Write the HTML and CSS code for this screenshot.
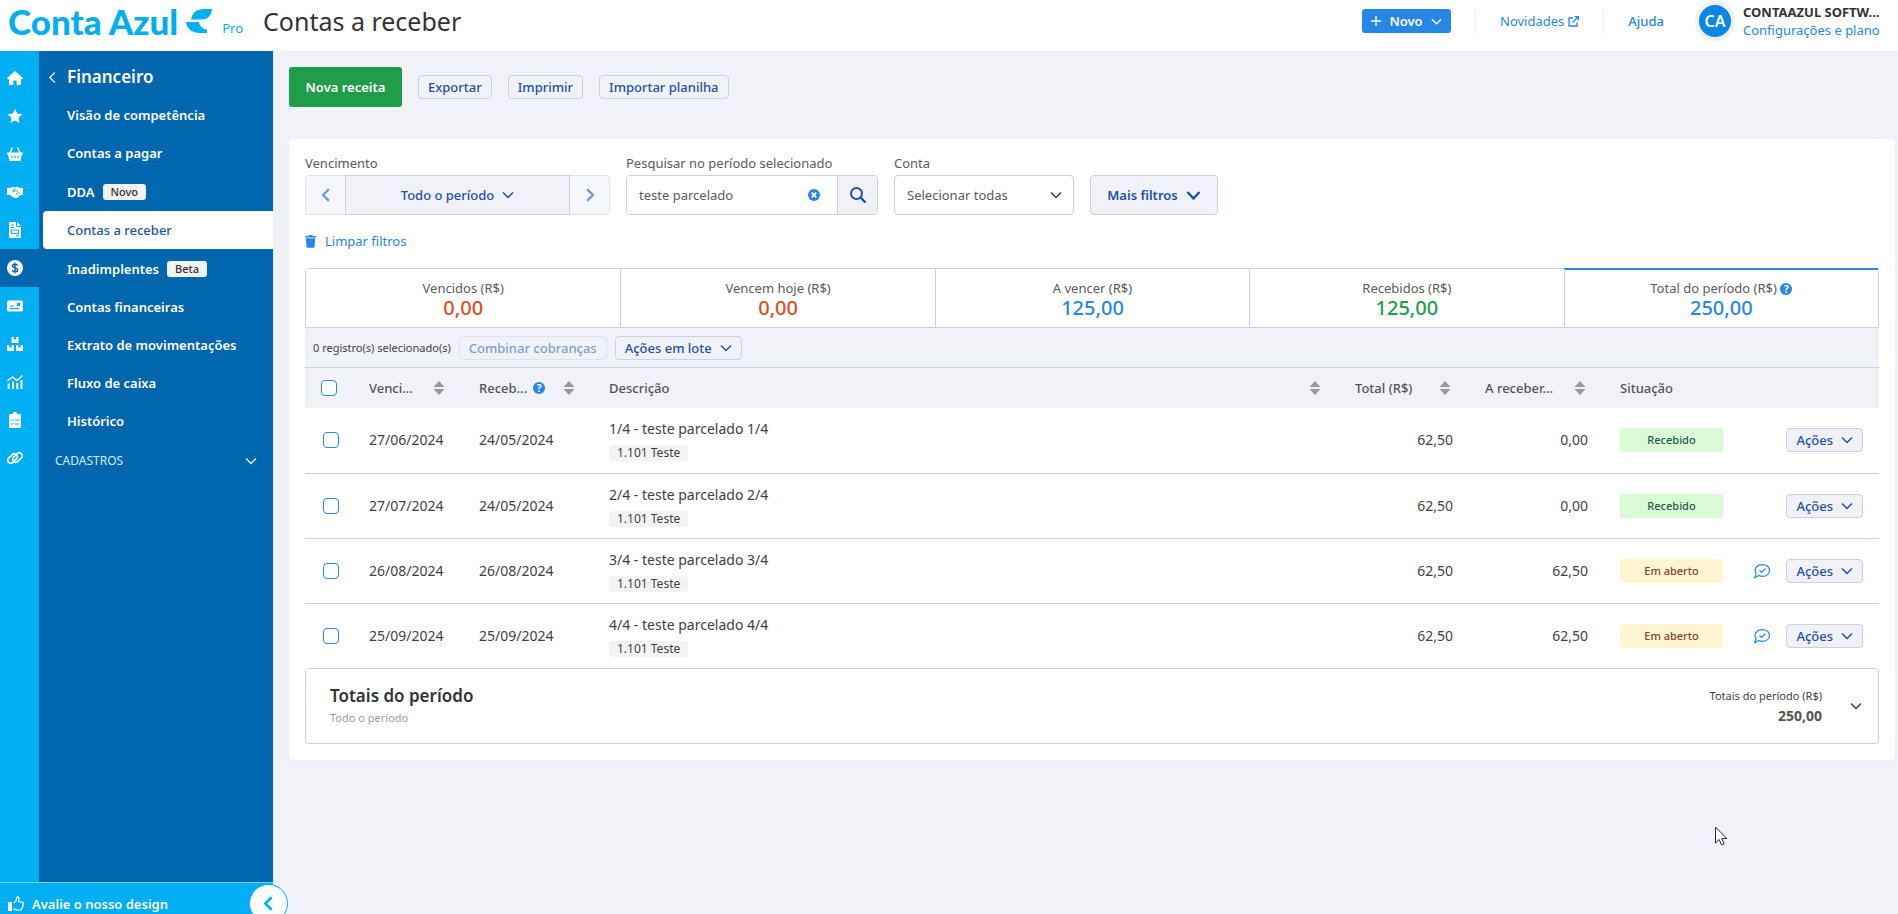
FILE: index.html
```html
<!DOCTYPE html>
<html lang="pt-BR">
<head>
<meta charset="UTF-8">
<meta name="viewport" content="width=device-width, initial-scale=1">
<title>Contas a receber</title>
<link rel="stylesheet" href="styles.css">
</head>
<body>
	<!-- icones reutilizados -->
	<svg class="sprite" width="0" height="0" aria-hidden="true">
		<symbol id="chevron-down" viewBox="0 0 12 12"><path d="M1 3.500 6 8.500l5-5" fill="none" stroke="currentColor" stroke-width="1.500"/></symbol>
		<symbol id="chevron-left" viewBox="0 0 12 12"><path d="M8.500 1 3.500 6l5 5" fill="none" stroke="currentColor" stroke-width="2"/></symbol>
		<symbol id="chevron-thin" viewBox="0 0 12 12"><path d="M8.500 .5 3 6l5.500 5.500" fill="none" stroke="currentColor" stroke-width="1.300"/></symbol>
		<symbol id="chevron-right" viewBox="0 0 12 12"><path d="M3.500 1l5 5-5 5" fill="none" stroke="currentColor" stroke-width="2"/></symbol>
		<symbol id="sort" viewBox="0 0 12 14"><path d="M.5 6 6 0l5.500 6zM.5 8h11L6 14z" fill="#9b9898"/></symbol>
		<symbol id="balloon" viewBox="0 0 16 16"><path d="M2.200 10.500C-.7 6.500 2.500 1.700 8.500 1.700c4 0 7 2.400 7 5.700s-3 5.900-7 5.900c-1.500 0-2.600-.4-3.500-.8L.7 14.700z" fill="none" stroke="currentColor" stroke-width="1.200"/><path d="m5.500 7.500 2 2 4-4" fill="none" stroke="currentColor" stroke-width="1.200"/></symbol>
	</svg>

	<header class="topbar">
		<a class="logo" href="#">
			<span class="logo-text">Conta Azul</span>
			<svg class="logo-leaf" width="26" height="24" viewBox="0 0 26 24"><path d="M5 10.500C6 4 11 0 18 0h8c-.5 6-4 10.500-10 10.500zM0 13h13c.5 4 3.500 7 8 7.500V24h-7C6 24 1 20 0 13z" fill="#00aff1"/></svg>
			<span class="logo-plan">Pro</span>
		</a>
		<h1>Contas a receber</h1>
		<button class="btn-new" type="button">
			<svg width="10" height="10" viewBox="0 0 10 10"><path d="M5 0v10M0 5h10" stroke="#fff" stroke-width="1.400"/></svg>
			Novo
			<svg width="11" height="11"><use href="#chevron-down"/></svg>
		</button>
		<a class="top-link top-news" href="#">Novidades
			<svg width="11" height="11" viewBox="0 0 11 11"><path d="M5 2H1v8h8V6.500M6.500.7h3.800v3.800M10 1 4.500 6.500" fill="none" stroke="currentColor" stroke-width="1.300"/></svg>
		</a>
		<a class="top-link top-help" href="#">Ajuda</a>
		<div class="account">
			<span class="avatar">CA</span>
			<div class="account-info">
				<strong>CONTAAZUL SOFTW...</strong>
				<a href="#">Configurações e plano</a>
			</div>
		</div>
	</header>

	<div class="page">
		<aside class="sidebar">
			<div class="menus">
				<nav class="rail" aria-label="Módulos">
					<a href="#" aria-label="Início"><svg viewBox="0 0 16 16"><path d="M8 1 0 8l.8 1.200H2V15h4.300v-4.500h3.400V15H14V9.200h1.200L16 8z"/></svg></a>
					<a href="#" aria-label="Favoritos"><svg viewBox="0 0 16 16"><path d="m8 .8 2.200 4.800 5.300.6-4 3.600 1.100 5.200L8 12.400 3.400 15l1.100-5.200-4-3.600 5.300-.6z"/></svg></a>
					<a href="#" aria-label="Vendas"><svg viewBox="0 0 16 16"><path d="M5.500 1.500 3 7m7.500-5.500L13 7" stroke="#fff" stroke-width="1.500"/><path d="M0 6.500h16v2h-1L13.500 15h-11L1 8.500H0z"/><path d="M5 9.500V12m3-2.500V12m3-2.500V12" stroke="#00aff1" stroke-width="1.100"/></svg></a>
					<a href="#" aria-label="Parcerias"><svg viewBox="0 0 16 16"><path d="M0 4h3l3-1.200 2 .7 2-.7L13 4h3v7h-2.500l-3 2.700-2 .3-2-.6L3 11H0z"/><path d="M8.500 4.500 5.500 7c1.300 1 2.500.3 3.500-.8l3.500 3.500M9 9l1.500 1.500" fill="none" stroke="#00aff1"/></svg></a>
					<a href="#" aria-label="Notas"><svg viewBox="0 0 16 16"><path d="M2 0h8l4 4v12H2z"/><path d="M9.500 0v4.500H14M4 3h3M4 5.500h3M4.500 8h7v3.500h-7zM9 13.700h3" fill="none" stroke="#00aff1"/></svg></a>
					<a class="active" href="#" aria-label="Financeiro"><svg viewBox="0 0 16 16"><circle cx="8" cy="8" r="8"/><path d="M10.600 5.600C10.200 4.600 9.200 4.300 8 4.300c-1.500 0-2.600.6-2.600 1.800C5.400 8.600 10.700 7.200 10.700 9.900c0 1.200-1.200 1.800-2.700 1.800-1.400 0-2.400-.5-2.800-1.500M8 2.800v10.400" fill="none" stroke="#0066ad" stroke-width="1.400"/></svg></a>
					<a href="#" aria-label="Conta digital"><svg viewBox="0 0 16 16"><rect y="2.500" width="16" height="11" rx="1.500"/><path d="M3 8h4M3 10.500h9" stroke="#00aff1"/><path d="M10 5h3v3h-3z" fill="#00aff1"/></svg></a>
					<a href="#" aria-label="Estoque"><svg viewBox="0 0 16 16"><path d="M4.500 1h2.300v2.500h2.400V1h2.300v6h-7zM0 9h2.300v2.500h2.400V9H7v6H0zM9 9h2.300v2.500h2.400V9H16v6H9z"/></svg></a>
					<a href="#" aria-label="Relatórios"><svg viewBox="0 0 16 16"><path d="M1.700 15V9.500M6 15V7.500M10.300 15V9M14.500 15V6" stroke="#fff" stroke-width="2"/><path d="M.5 7 5.500 3l4.500 3.500 5.500-5" fill="none" stroke="#fff" stroke-width="1.400"/></svg></a>
					<a href="#" aria-label="Contador"><svg viewBox="0 0 16 16"><path d="M3 2h2.500a2.500 2 0 0 1 5 0H13q1 0 1 1v12q0 1-1 1H3q-1 0-1-1V3q0-1 1-1z"/><path d="m4 7.500 1 1L6.500 7M8 8h4M4 11.500l1 1L6.500 11M8 12h4" fill="none" stroke="#00aff1"/></svg></a>
					<a href="#" aria-label="Integrações"><svg viewBox="0 0 16 16"><g fill="none" stroke="#fff" stroke-width="1.600"><rect x="0" y="5.500" width="11" height="6" rx="3" transform="rotate(-45 5.500 8.500)"/><rect x="5" y="4.500" width="11" height="6" rx="3" transform="rotate(-45 10.500 7.500)"/></g></svg></a>
				</nav>
				<nav class="submenu" aria-label="Financeiro">
					<a class="submenu-title" href="#"><svg width="11" height="11"><use href="#chevron-thin"/></svg>Financeiro</a>
					<a href="#">Visão de competência</a>
					<a href="#">Contas a pagar</a>
					<a class="tagged" href="#">DDA <span class="tag">Novo</span></a>
					<a class="active" href="#" aria-current="page">Contas a receber</a>
					<a class="tagged" href="#">Inadimplentes <span class="tag">Beta</span></a>
					<a href="#">Contas financeiras</a>
					<a href="#">Extrato de movimentações</a>
					<a href="#">Fluxo de caixa</a>
					<a href="#">Histórico</a>
					<button class="submenu-group" type="button">CADASTROS <svg width="12" height="12"><use href="#chevron-down"/></svg></button>
				</nav>
			</div>
			<div class="feedback">
				<a href="#">
					<svg width="16" height="16" viewBox="0 0 16 16"><path d="M0 6h4v9H0z" fill="#fff"/><path d="M5.500 7 8 5l.8-3.500c.2-1.100 2.200-.8 2.200.8L10.500 6H14c1.300 0 1.600 1.400.8 2.200.6.7.3 1.700-.3 2 .3.900-.1 1.600-.7 1.900.1 1.200-.6 1.900-1.800 1.900H9c-1.500 0-2.200-1-3.500-1.200" fill="none" stroke="#fff" stroke-width="1.200"/></svg>
					Avalie o nosso design
				</a>
				<button class="collapse" type="button" aria-label="Recolher menu"><svg width="15" height="15"><use href="#chevron-left"/></svg></button>
			</div>
		</aside>

		<main>
			<div class="actions">
				<button class="btn-primary" type="button">Nova receita</button>
				<button class="btn-small" type="button">Exportar</button>
				<button class="btn-small" type="button">Imprimir</button>
				<button class="btn-small" type="button">Importar planilha</button>
			</div>

			<section class="panel">
				<div class="filters">
					<div class="field">
						<label for="period">Vencimento</label>
						<div class="period">
							<button class="step" type="button" aria-label="Período anterior"><svg width="14" height="14"><use href="#chevron-left"/></svg></button>
							<button class="period-value" id="period" type="button">Todo o período <svg width="12" height="12"><use href="#chevron-down"/></svg></button>
							<button class="step" type="button" aria-label="Próximo período"><svg width="14" height="14"><use href="#chevron-right"/></svg></button>
						</div>
					</div>
					<div class="field">
						<label for="search">Pesquisar no período selecionado</label>
						<div class="search">
							<input id="search" type="text" value="teste parcelado">
							<button class="search-clear" type="button" aria-label="Limpar pesquisa"><svg width="12" height="12" viewBox="0 0 12 12"><circle cx="6" cy="6" r="6" fill="#2687e9"/><path d="m3.700 3.700 4.600 4.600m0-4.600L3.700 8.300" stroke="#fff" stroke-width="1.800"/></svg></button>
							<button class="search-go" type="button" aria-label="Pesquisar"><svg width="18" height="18" viewBox="0 0 18 18"><circle cx="7.500" cy="7.500" r="5.500" fill="none" stroke="currentColor" stroke-width="2"/><path d="m11.500 11.500 5 5" stroke="currentColor" stroke-width="2.400"/></svg></button>
						</div>
					</div>
					<div class="field">
						<label for="account">Conta</label>
						<div class="select">
							<select id="account"><option>Selecionar todas</option></select>
							<svg width="12" height="12"><use href="#chevron-down"/></svg>
						</div>
					</div>
					<button class="btn-filters" type="button">Mais filtros <svg width="15" height="13" viewBox="0 0 15 13"><path d="m1.500 3 6 6.500 6-6.500" fill="none" stroke="currentColor" stroke-width="2.400"/></svg></button>
				</div>
				<a class="clear" href="#">
					<svg width="11" height="13" viewBox="0 0 11 13"><path d="M3.500 0h4v1H11v1.500H0V1h3.500zM.8 3.300h9.400l-.7 8.500q-.1 1-1 1h-6q-.9 0-1-1z" fill="currentColor"/></svg>
					Limpar filtros
				</a>

				<div class="summary">
					<button type="button">Vencidos (R$)<b class="red">0,00</b></button>
					<button type="button">Vencem hoje (R$)<b class="red">0,00</b></button>
					<button type="button">A vencer (R$)<b class="blue">125,00</b></button>
					<button type="button">Recebidos (R$)<b class="green">125,00</b></button>
					<button class="selected" type="button"><span>Total do período (R$) <i class="help">?</i></span><b class="blue">250,00</b></button>
				</div>

				<div class="bulk">
					<span>0 registro(s) selecionado(s)</span>
					<button class="btn-small" type="button" disabled>Combinar cobranças</button>
					<button class="btn-small" type="button">Ações em lote <svg width="12" height="12"><use href="#chevron-down"/></svg></button>
				</div>

				<table>
					<colgroup>
						<col class="col-check"><col class="col-due"><col class="col-paid"><col>
						<col class="col-total"><col class="col-open"><col class="col-status"><col class="col-actions">
					</colgroup>
					<thead>
						<tr>
							<th><input type="checkbox" aria-label="Selecionar todos"></th>
							<th><div>Venci... <svg width="12" height="14"><use href="#sort"/></svg></div></th>
							<th><div>Receb... <i class="help">?</i> <svg width="12" height="14"><use href="#sort"/></svg></div></th>
							<th><div>Descrição <svg width="12" height="14"><use href="#sort"/></svg></div></th>
							<th><div>Total (R$) <svg width="12" height="14"><use href="#sort"/></svg></div></th>
							<th><div>A receber... <svg width="12" height="14"><use href="#sort"/></svg></div></th>
							<th>Situação</th>
							<th></th>
						</tr>
					</thead>
					<tbody>
						<tr>
							<td><input type="checkbox" aria-label="Selecionar 1/4"></td>
							<td>27/06/2024</td>
							<td>24/05/2024</td>
							<td>1/4 - teste parcelado 1/4<span class="category">1.101 Teste</span></td>
							<td class="num">62,50</td>
							<td class="num">0,00</td>
							<td><span class="status paid">Recebido</span></td>
							<td><div class="row-actions"><button class="btn-small" type="button">Ações <svg width="12" height="12"><use href="#chevron-down"/></svg></button></div></td>
						</tr>
						<tr>
							<td><input type="checkbox" aria-label="Selecionar 2/4"></td>
							<td>27/07/2024</td>
							<td>24/05/2024</td>
							<td>2/4 - teste parcelado 2/4<span class="category">1.101 Teste</span></td>
							<td class="num">62,50</td>
							<td class="num">0,00</td>
							<td><span class="status paid">Recebido</span></td>
							<td><div class="row-actions"><button class="btn-small" type="button">Ações <svg width="12" height="12"><use href="#chevron-down"/></svg></button></div></td>
						</tr>
						<tr>
							<td><input type="checkbox" aria-label="Selecionar 3/4"></td>
							<td>26/08/2024</td>
							<td>26/08/2024</td>
							<td>3/4 - teste parcelado 3/4<span class="category">1.101 Teste</span></td>
							<td class="num">62,50</td>
							<td class="num">62,50</td>
							<td><span class="status open">Em aberto</span></td>
							<td><div class="row-actions"><svg class="balloon" width="16" height="16"><use href="#balloon"/></svg><button class="btn-small" type="button">Ações <svg width="12" height="12"><use href="#chevron-down"/></svg></button></div></td>
						</tr>
						<tr>
							<td><input type="checkbox" aria-label="Selecionar 4/4"></td>
							<td>25/09/2024</td>
							<td>25/09/2024</td>
							<td>4/4 - teste parcelado 4/4<span class="category">1.101 Teste</span></td>
							<td class="num">62,50</td>
							<td class="num">62,50</td>
							<td><span class="status open">Em aberto</span></td>
							<td><div class="row-actions"><svg class="balloon" width="16" height="16"><use href="#balloon"/></svg><button class="btn-small" type="button">Ações <svg width="12" height="12"><use href="#chevron-down"/></svg></button></div></td>
						</tr>
					</tbody>
				</table>

				<div class="totals">
					<div class="totals-title">
						<h2>Totais do período</h2>
						<p>Todo o período</p>
					</div>
					<div class="totals-value">
						<p>Totais do período (R$)</p>
						<strong>250,00</strong>
					</div>
					<button type="button" aria-label="Expandir totais"><svg width="12" height="12"><use href="#chevron-down"/></svg></button>
				</div>
			</section>
		</main>
	</div>

	<svg class="pointer" width="13" height="20" viewBox="0 0 13 20" aria-hidden="true"><path d="M.5 1v16l3.700-3.500 2.300 5.300 2.600-1.100-2.300-5.200h5z" fill="#fff" stroke="#27273a"/></svg>
</body>
</html>
```
FILE: styles.css
```css
* {
	box-sizing: border-box;
}

body {
	margin: 0;
	height: 100vh;
	display: flex;
	flex-direction: column;
	overflow: hidden;
	background: #f1f2f8;
	color: #3f3f3f;
	font-family: "Noto Sans", "Liberation Sans", sans-serif;
	font-size: 13px;
	line-height: 20px;
}

a {
	color: #2687e9;
	text-decoration: none;
}

button, input, select {
	font: inherit;
	color: inherit;
}

button {
	display: flex;
	align-items: center;
	justify-content: center;
	gap: 8px;
	padding: 0;
	border: 0;
	background: none;
	white-space: nowrap;
	cursor: pointer;
}

svg {
	flex: none;
}

h1, h2, p {
	margin: 0;
}

.sprite {
	position: absolute;
}

/* topo */
.topbar {
	display: flex;
	align-items: center;
	flex: none;
	height: 51px;
	padding: 0 12px 9px 8px;
	background: #fff;
	white-space: nowrap;
}

.logo {
	display: flex;
	align-items: center;
	width: 255px;
	color: #00aff1;
}

.logo-text {
	font-family: Lato, "Noto Sans", sans-serif;
	font-size: 35px;
	font-weight: 900;
}

.logo-leaf {
	margin-left: 8px;
}

.logo-plan {
	margin: 14px 0 0 10px;
}

h1 {
	margin-right: auto;
	color: #333;
	font-size: 25px;
	font-weight: 400;
	line-height: 28px;
}

.btn-new {
	height: 24px;
	width: 89px;
	border-radius: 3px;
	background: #2687e9;
	color: #fff;
	font-weight: 600;
}

.top-link {
	display: flex;
	align-items: center;
	gap: 4px;
	height: 24px;
	padding-left: 24px;
	border-left: 1px solid #eceef5;
	margin-left: 24px;
}

.top-help {
	font-weight: 500;
}

.account {
	display: flex;
	align-items: center;
	gap: 8px;
	margin-left: 31px;
	width: 191px;
}

.avatar {
	display: flex;
	align-items: center;
	justify-content: center;
	flex: none;
	width: 40px;
	height: 40px;
	border: 4px solid #eff0f6;
	border-radius: 50%;
	background: #0a86e4;
	color: #fff;
	font-size: 16px;
	font-weight: 600;
}

.account-info {
	display: flex;
	flex-direction: column;
}

.account-info strong {
	color: #333;
	font-weight: 700;
	line-height: 18px;
}

.account-info a {
	line-height: 18px;
}

.page {
	display: flex;
	flex: 1;
	min-height: 0;
}

/* menu lateral */
.sidebar {
	display: flex;
	flex-direction: column;
	flex: none;
	width: 273px;
}

.menus {
	display: flex;
	flex: 1;
}

.rail {
	width: 39px;
	padding-top: 8px;
	background: #00aff1;
}

.rail a {
	display: flex;
	align-items: center;
	height: 38px;
	padding-left: 7px;
}

.rail .active {
	background: #0066ad;
}

.rail svg {
	width: 16px;
	height: 16px;
	fill: #fff;
}

.submenu {
	flex: 1;
	padding-top: 7px;
	background: #0066ad;
}

.submenu a {
	display: flex;
	align-items: center;
	height: 38px;
	padding-left: 28px;
	color: #fff;
	font-weight: 600;
}

.submenu .submenu-title {
	gap: 9px;
	padding-left: 8px;
	font-size: 17px;
}

.submenu .tagged {
	gap: 8px;
	height: 39px;
}

.tag {
	padding: 0 8px;
	border-radius: 3px;
	background: #f3f3f3;
	color: #333;
	font-size: 11px;
	font-weight: 500;
	line-height: 16px;
}

.submenu .active {
	margin-left: 4px;
	padding-left: 24px;
	border-radius: 4px 0 0 4px;
	background: #fff;
	color: #1a56a6;
	font-weight: 500;
}

.submenu-group {
	justify-content: space-between;
	width: 100%;
	height: 41px;
	padding: 0 16px;
	color: #d5ecfb;
	font-size: 12px;
}

.feedback {
	position: relative;
	height: 32px;
	padding: 11px 0 0 8px;
	border-top: 1px solid #7fd0f4;
	background: #00aff1;
}

.feedback a {
	display: flex;
	align-items: center;
	gap: 8px;
	color: #fff;
	font-weight: 600;
}

.collapse {
	position: absolute;
	top: 1px;
	right: -15px;
	width: 39px;
	height: 39px;
	border: 1px solid #00aff1;
	border-radius: 50%;
	background: #fff;
	color: #00aff1;
}

/* conteudo */
main {
	flex: 1;
	min-width: 0;
	padding: 16px 3px 16px 16px;
}

.actions {
	display: flex;
	gap: 16px;
	margin-bottom: 32px;
}

.btn-primary {
	width: 113px;
	height: 40px;
	border-radius: 3px;
	background: #1f9d48;
	color: #fff;
	font-weight: 600;
}

.btn-small {
	height: 24px;
	padding: 0 9px;
	border: 1px solid #c9d2e0;
	border-radius: 4px;
	background: #f1f2f8;
	color: #1d51a8;
	font-weight: 500;
}

.btn-small:disabled {
	border-color: #dce3ea;
	color: #7a9fd2;
}

.actions .btn-small {
	margin-top: 8px;
}

.panel {
	padding: 16px;
	border-radius: 4px;
	background: #fff;
	box-shadow: 0 2px 12px #e9eef5;
}

.filters {
	display: flex;
	align-items: flex-end;
	gap: 16px;
}

.field label {
	display: block;
	margin-bottom: 4px;
	line-height: 16px;
	color: #5a5a5a;
}

.period {
	display: flex;
}

.period button {
	height: 40px;
	border: 1px solid #c9d2e0;
	background: #f1f2f8;
	color: #1d51a8;
	font-weight: 500;
}

.period .period-value {
	width: 225px;
}

.period .step {
	width: 40px;
	border-color: #dfe4ec;
	border-radius: 4px 0 0 4px;
	border-right: 0;
	background: #f6f7fc;
	color: #729dd2;
}

.period .step:last-child {
	border-radius: 0 4px 4px 0;
	border-right: 1px solid #dfe4ec;
	border-left: 0;
}

.search {
	display: flex;
	width: 252px;
	height: 40px;
	border: 1px solid #c9d2e0;
	border-radius: 4px;
	overflow: hidden;
}

.search input {
	flex: 1;
	min-width: 0;
	padding: 0 0 0 12px;
	border: 0;
	outline: 0;
	color: #5a5a5a;
}

.search-clear {
	width: 46px;
}

.search-go {
	width: 40px;
	border-left: 1px solid #c9d2e0;
	background: #f1f2f8;
	color: #1d51a8;
}

.select {
	position: relative;
	width: 180px;
}

.select select {
	width: 100%;
	height: 40px;
	padding: 0 12px;
	border: 1px solid #c9d2e0;
	border-radius: 4px;
	background: #fff;
	color: #5a5a5a;
	appearance: none;
}

.select svg {
	position: absolute;
	top: 14px;
	right: 12px;
	pointer-events: none;
}

.btn-filters {
	width: 128px;
	height: 40px;
	border: 1px solid #c9d2e0;
	border-radius: 4px;
	background: #f1f2f8;
	color: #1d51a8;
	font-weight: 600;
}

.clear {
	display: flex;
	align-items: center;
	gap: 9px;
	width: max-content;
	margin: 16px 0 17px;
}

.summary {
	display: grid;
	grid-template-columns: repeat(5, 1fr);
	height: 60px;
	border: 1px solid #c9d2e0;
	border-radius: 4px 4px 0 0;
}

.summary button {
	flex-direction: column;
	gap: 0;
	border-left: 1px solid #c9d2e0;
	color: #5a5a5a;
}

.summary button:first-child {
	border-left: 0;
}

.summary .selected {
	box-shadow: 0 -1px 0 #2687e9, inset 0 1px 0 #2687e9;
}

.summary b {
	font-size: 20px;
	font-weight: 500;
	line-height: 20px;
}

.red {
	color: #de4d24;
}

.blue {
	color: #2687e9;
}

.green {
	color: #1f9d48;
}

.help {
	display: inline-block;
	width: 12px;
	height: 12px;
	border-radius: 50%;
	background: #2687e9;
	color: #fff;
	font-size: 10px;
	font-style: normal;
	font-weight: 700;
	line-height: 12px;
	text-align: center;
}

.bulk {
	display: flex;
	align-items: center;
	gap: 8px;
	height: 40px;
	padding-left: 8px;
	border-bottom: 1px solid #c9d2e0;
	background: #f1f2f8;
}

.bulk span {
	font-size: 11px;
}

/* tabela */
table {
	width: 100%;
	border-collapse: collapse;
	table-layout: fixed;
}

.col-check {
	width: 48px;
}

.col-due {
	width: 110px;
}

.col-paid, .col-total {
	width: 130px;
}

.col-open, .col-status {
	width: 135px;
}

.col-actions {
	width: 140px;
}

th, td {
	padding: 0 16px;
	text-align: left;
	white-space: nowrap;
}

th {
	height: 40px;
	padding-right: 18px;
	background: #f1f2f8;
	color: #545454;
	font-weight: 500;
}

td:first-child {
	padding-left: 18px;
	padding-right: 0;
}

th div {
	display: flex;
	align-items: center;
	gap: 6px;
}

th svg {
	margin-left: auto;
}

td {
	height: 65px;
	border-bottom: 1px solid #c9d2e0;
	font-size: 14px;
}

tbody tr:last-child td {
	border-bottom: 0;
}

input[type="checkbox"] {
	display: block;
	width: 16px;
	height: 16px;
	margin: 0;
	border: 1px solid #2687e9;
	border-radius: 4px;
	background: #fff;
	appearance: none;
}

.category {
	display: block;
	width: max-content;
	margin-top: 6px;
	padding: 0 8px;
	border-radius: 4px;
	background: #f3f3f3;
	font-size: 12px;
	line-height: 16px;
}

.num {
	text-align: right;
}

.status {
	display: block;
	border-radius: 3px;
	font-size: 11px;
	font-weight: 500;
	line-height: 24px;
	text-align: center;
}

.paid {
	background: #dbfad6;
	color: #245a4c;
}

.open {
	background: #fff5d1;
	color: #85442e;
}

.row-actions {
	display: flex;
	align-items: center;
	justify-content: flex-end;
	gap: 16px;
	font-size: 13px;
}

.balloon {
	color: #2687e9;
}

.totals {
	display: flex;
	align-items: center;
	height: 76px;
	padding: 0 16px 0 24px;
	border: 1px solid #c9d2e0;
	border-radius: 4px;
}

.totals-title {
	margin-right: auto;
}

h2 {
	color: #333;
	font-size: 17px;
	font-weight: 600;
	line-height: 24px;
}

.totals-title p {
	color: #9b9b9b;
	font-size: 11px;
}

.totals-value {
	margin-right: 28px;
	text-align: right;
}

.totals-value p {
	font-size: 11px;
}

.totals-value strong {
	color: #545454;
	font-size: 14px;
}

/* cursor do mouse */
.pointer {
	position: absolute;
	top: 826px;
	left: 1715px;
}
```
